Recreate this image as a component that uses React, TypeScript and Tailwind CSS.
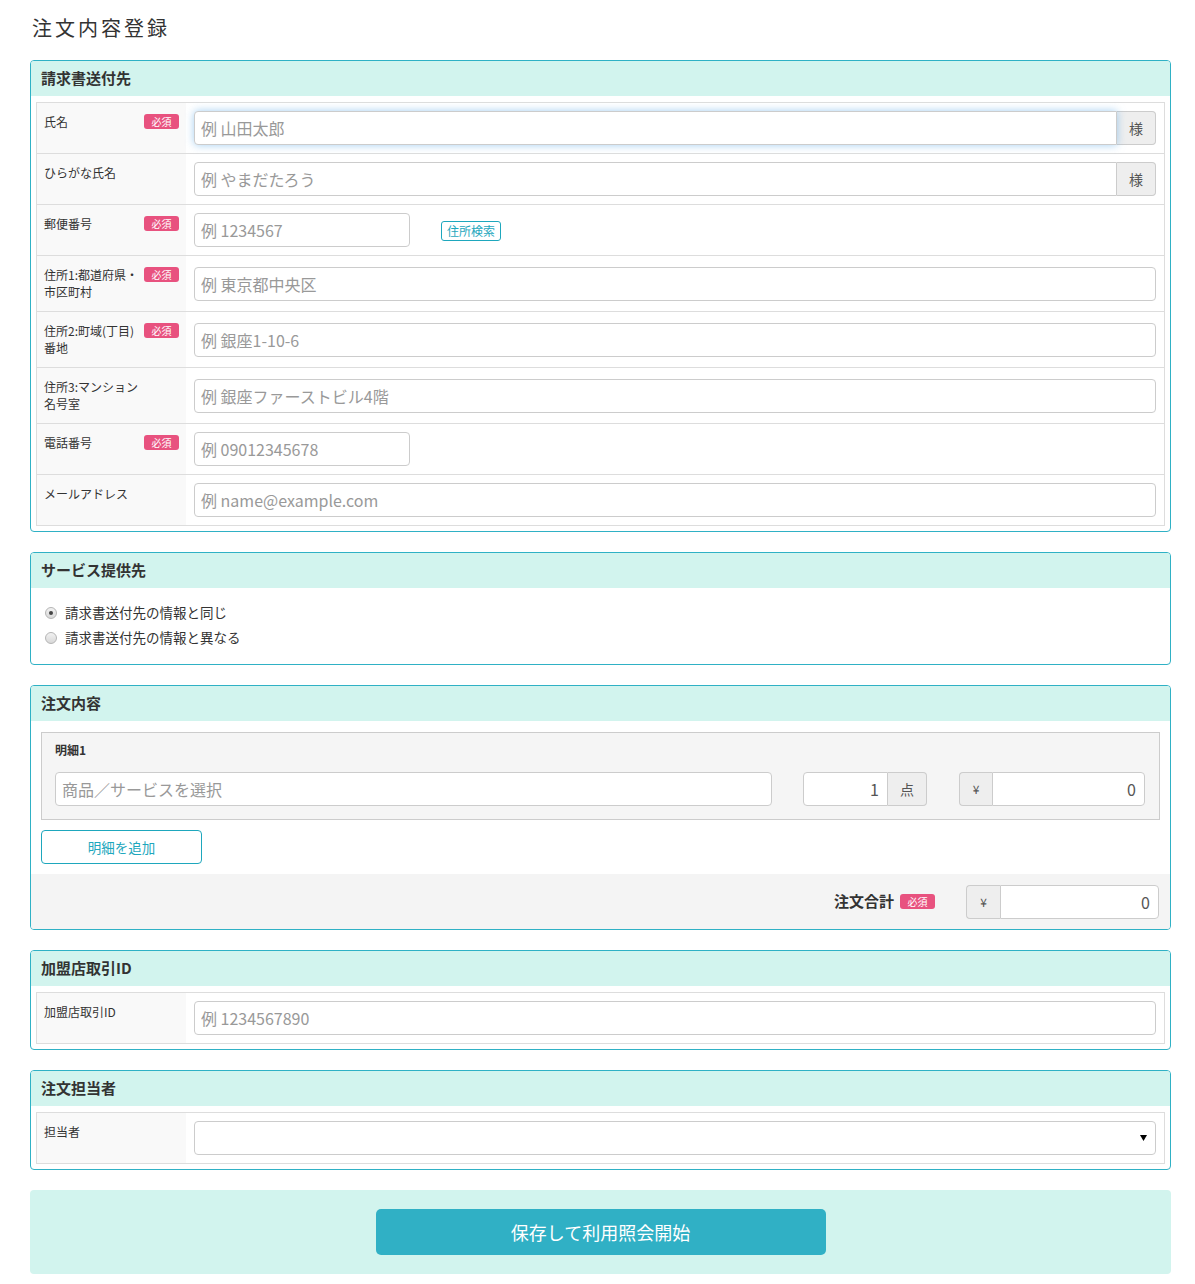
import React from 'react';

const FONT = { fontFamily: '"Noto Sans CJK JP", "Noto Sans", sans-serif' };

const Badge = ({ className = '' }: { className?: string }) => (
  <span
    className={`inline-flex h-[15px] w-[35px] shrink-0 items-center justify-center rounded-[3px] bg-[#e8527f] text-[10px] leading-none text-white ${className}`}
  >
    必須
  </span>
);

const inputBase =
  'h-[34px] min-w-0 border border-[#ccc] bg-white px-[6px] text-[16px] text-[#555] outline-none placeholder:text-[#999]';

interface RowProps {
  label: React.ReactNode;
  required?: boolean;
  children: React.ReactNode;
  last?: boolean;
}

function Row({ label, required, children, last }: RowProps) {
  return (
    <div className={`flex ${last ? '' : 'border-b border-[#ddd]'}`}>
      <div className="flex w-[149px] shrink-0 items-start justify-between bg-[#f9f9f9] pb-[11px] pl-[7px] pr-[7px] pt-[10px]">
        <div className="text-[12px] leading-[17px] text-[#333]">{label}</div>
        {required && <Badge className="mt-[1px]" />}
      </div>
      <div className="flex flex-1 items-center px-[8px] py-[8px]">{children}</div>
    </div>
  );
}

function Panel({ title, children }: { title: string; children: React.ReactNode }) {
  return (
    <section className="overflow-hidden rounded-[4px] border border-[#2fb1c5] bg-white">
      <h2 className="flex h-[35px] items-center bg-[#d2f4ee] px-[10px] text-[15px] font-bold text-[#333]">{title}</h2>
      {children}
    </section>
  );
}

function TextWithSama({ placeholder, focused }: { placeholder: string; focused?: boolean }) {
  return (
    <div className="flex w-full">
      <input
        placeholder={placeholder}
        className={`${inputBase} flex-1 rounded-l-[4px] ${
          focused ? 'relative z-10 border-[#66afe9] shadow-[0_0_8px_rgba(102,175,233,0.6)]' : ''
        }`}
      />
      <span className="flex h-[34px] w-[39px] shrink-0 items-center justify-center rounded-r-[4px] border border-l-0 border-[#ccc] bg-[#eee] text-[14px] text-[#555]">
        様
      </span>
    </div>
  );
}

function Radio({ checked, label }: { checked?: boolean; label: string }) {
  return (
    <label className="flex h-[25px] items-center text-[13.5px] text-[#333]">
      <span className="mr-[8px] flex h-[12px] w-[12px] items-center justify-center rounded-full border border-[#b5b5b5] bg-gradient-to-b from-[#f2f2f2] to-[#d8d8d8]">
        {checked && <span className="h-[4px] w-[4px] rounded-full bg-[#444]" />}
      </span>
      {label}
    </label>
  );
}

export default function App() {
  return (
    <div className="min-h-[1284px] w-[1195px] bg-white text-[#333]" style={FONT}>
      <div className="ml-[30px] w-[1141px] pb-[10px]">
        <h1 className="mb-[20px] pl-[2px] pt-[16px] text-[20px] font-normal leading-[24px] tracking-[3px] text-[#333]">
          注文内容登録
        </h1>

        <div className="flex flex-col gap-[20px]">
          <Panel title="請求書送付先">
            <div className="px-[5px] pb-[5px] pt-[6px]">
              <div className="border border-[#ddd]">
                <Row label="氏名" required>
                  <TextWithSama placeholder="例 山田太郎" focused />
                </Row>
                <Row label="ひらがな氏名">
                  <TextWithSama placeholder="例 やまだたろう" />
                </Row>
                <Row label="郵便番号" required>
                  <input placeholder="例 1234567" className={`${inputBase} w-[216px] rounded-[4px]`} />
                  <button className="ml-[31px] mt-[2px] h-[20px] w-[60px] shrink-0 whitespace-nowrap rounded-[3px] border border-[#1ea7bd] text-[12px] leading-none text-[#1ea7bd]">
                    住所検索
                  </button>
                </Row>
                <Row
                  label={
                    <>
                      住所1:都道府県・
                      <br />
                      市区町村
                    </>
                  }
                  required
                >
                  <input placeholder="例 東京都中央区" className={`${inputBase} w-full rounded-[4px]`} />
                </Row>
                <Row
                  label={
                    <>
                      住所2:町域(丁目)
                      <br />
                      番地
                    </>
                  }
                  required
                >
                  <input placeholder="例 銀座1-10-6" className={`${inputBase} w-full rounded-[4px]`} />
                </Row>
                <Row
                  label={
                    <>
                      住所3:マンション
                      <br />
                      名号室
                    </>
                  }
                >
                  <input placeholder="例 銀座ファーストビル4階" className={`${inputBase} w-full rounded-[4px]`} />
                </Row>
                <Row label="電話番号" required>
                  <input placeholder="例 09012345678" className={`${inputBase} w-[216px] rounded-[4px]`} />
                </Row>
                <Row label="メールアドレス" last>
                  <input placeholder="例 name@example.com" className={`${inputBase} w-full rounded-[4px]`} />
                </Row>
              </div>
            </div>
          </Panel>

          <Panel title="サービス提供先">
            <div className="pb-[14px] pl-[14px] pt-[12px]">
              <Radio checked label="請求書送付先の情報と同じ" />
              <Radio label="請求書送付先の情報と異なる" />
            </div>
          </Panel>

          <Panel title="注文内容">
            <div className="px-[10px] pb-[10px] pt-[11px]">
              <div className="border border-[#ccc] bg-[#f5f5f5] pb-[13px] pl-[13px] pr-[14px] pt-[8px]">
                <div className="mb-[13px] text-[12px] font-bold leading-[18px] text-[#333]">明細1</div>
                <div className="flex items-center">
                  <input placeholder="商品／サービスを選択" className={`${inputBase} flex-1 rounded-[4px]`} />
                  <div className="ml-[31px] flex w-[124px] shrink-0">
                    <input defaultValue="1" className={`${inputBase} w-full rounded-l-[4px] px-[8px] text-right`} />
                    <span className="flex h-[34px] w-[39px] shrink-0 items-center justify-center rounded-r-[4px] border border-l-0 border-[#ccc] bg-[#eee] text-[14px] text-[#555]">
                      点
                    </span>
                  </div>
                  <div className="ml-[32px] flex w-[186px] shrink-0">
                    <span className="flex h-[34px] w-[33px] shrink-0 items-center justify-center rounded-l-[4px] border border-r-0 border-[#ccc] bg-[#eee] text-[12px] text-[#555]">
                      ¥
                    </span>
                    <input defaultValue="0" className={`${inputBase} w-full rounded-r-[4px] px-[8px] text-right`} />
                  </div>
                </div>
              </div>
              <button className="mt-[10px] h-[34px] w-[161px] rounded-[4px] border border-[#1ea7bd] bg-white text-[13.5px] text-[#1ea7bd]">
                明細を追加
              </button>
            </div>
            <div className="flex h-[55px] items-center justify-end bg-[#f4f4f4] pr-[11px]">
              <span className="text-[15px] font-bold text-[#333]">注文合計</span>
              <Badge className="ml-[6px] w-[33px]" />
              <div className="ml-[31px] flex w-[193px]">
                <span className="flex h-[34px] w-[34px] shrink-0 items-center justify-center rounded-l-[4px] border border-r-0 border-[#ccc] bg-[#eee] text-[12px] text-[#555]">
                  ¥
                </span>
                <input defaultValue="0" className={`${inputBase} w-full rounded-r-[4px] px-[8px] text-right`} />
              </div>
            </div>
          </Panel>

          <Panel title="加盟店取引ID">
            <div className="px-[5px] pb-[5px] pt-[6px]">
              <div className="border border-[#ddd]">
                <Row label="加盟店取引ID" last>
                  <input placeholder="例 1234567890" className={`${inputBase} w-full rounded-[4px]`} />
                </Row>
              </div>
            </div>
          </Panel>

          <Panel title="注文担当者">
            <div className="px-[5px] pb-[5px] pt-[6px]">
              <div className="border border-[#ddd]">
                <Row label="担当者" last>
                  <div className="flex h-[34px] w-full items-center justify-end rounded-[4px] border border-[#ccc] bg-white pr-[8px]">
                    <svg width="7" height="6" viewBox="0 0 7 6" className="text-black">
                      <path d="M0 0h7L3.5 6z" fill="currentColor" />
                    </svg>
                  </div>
                </Row>
              </div>
            </div>
          </Panel>
        </div>

        <div className="mt-[20px] flex h-[84px] items-center justify-center rounded-[4px] bg-[#d2f4ee]">
          <button className="h-[46px] w-[450px] rounded-[5px] bg-[#30b0c5] text-[18px] text-white">
            保存して利用照会開始
          </button>
        </div>
      </div>
    </div>
  );
}
